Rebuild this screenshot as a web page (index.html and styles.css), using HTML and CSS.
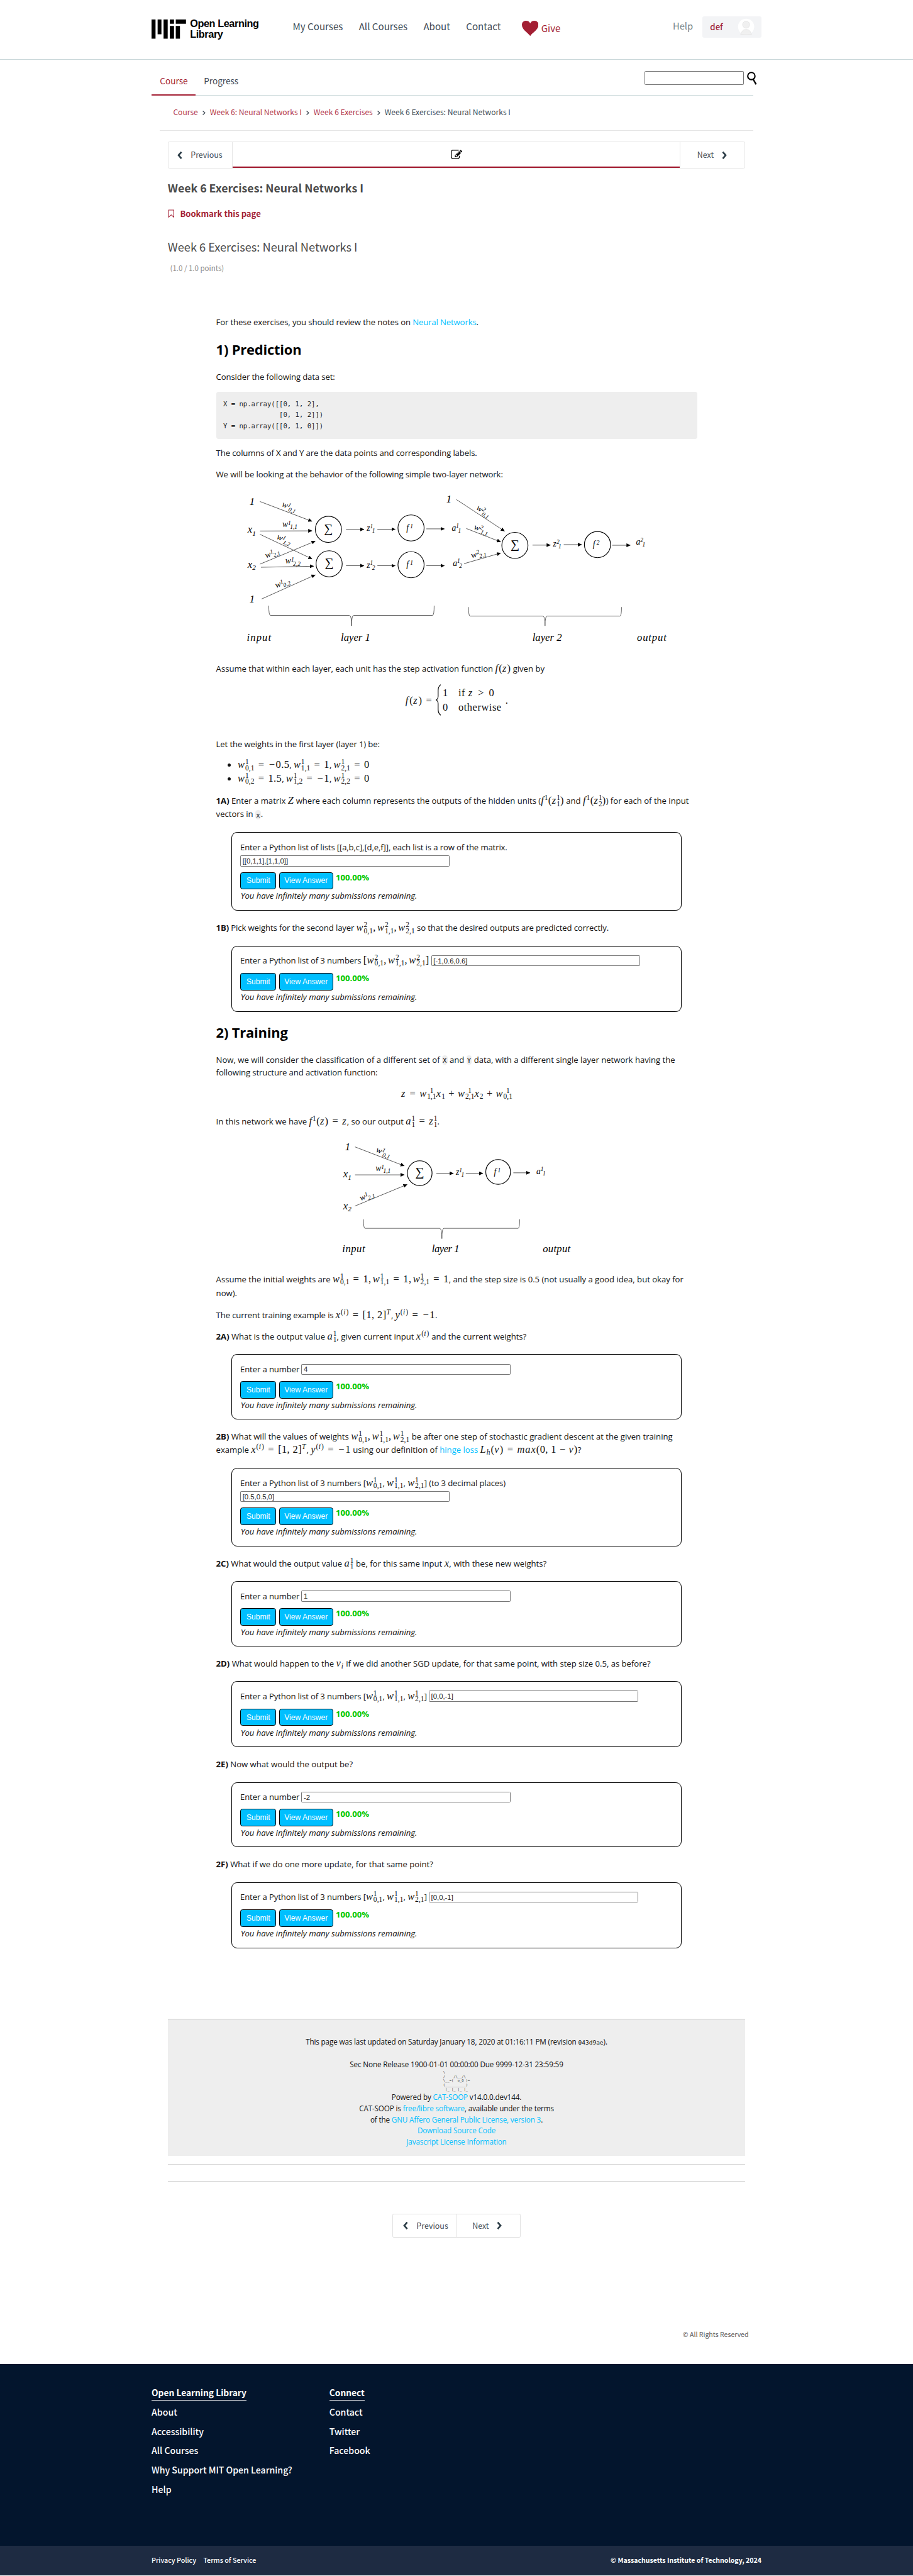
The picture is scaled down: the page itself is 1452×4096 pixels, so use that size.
FILE: index.html
```html
<!DOCTYPE html>
<html lang="en">
<head>
<meta charset="utf-8">
<title>Week 6 Exercises: Neural Networks I</title>
<link rel="stylesheet" href="styles.css">
</head>
<body>
<svg class="defs" width="0" height="0" aria-hidden="true">
  <defs>
    <marker id="arrow" markerUnits="userSpaceOnUse" markerWidth="9" markerHeight="8" refX="8" refY="4" orient="auto"><path d="M0 0L8.500 4L0 8z"/></marker>
    <symbol id="left" viewBox="0 0 12 18"><path d="M10 2L4 9L10 16" fill="none" stroke="#2d3e48" stroke-width="3.600"/></symbol>
    <symbol id="right" viewBox="0 0 12 18"><path d="M2 2L8 9L2 16" fill="none" stroke="#2d3e48" stroke-width="3.600"/></symbol>
    <symbol id="sep" viewBox="0 0 25 12"><path d="M10 2l4.500 4L10 10" fill="none" stroke="#414c57" stroke-width="1.700"/></symbol>
  </defs>
</svg>

<header class="top">
  <div class="top-in">
    <a class="logo">
      <svg class="mit" viewBox="0 0 74 42"><path d="M0 0h8.400v40.500H0zM12.800 0h8v31h-8zM25.300 0h8.700v40.500h-8.700zM38.500 0h8.800v9h-8.800zM38.500 13.500h8.800v27h-8.800zM51 0h21.500v9H51zM51 13.500h8.800v27H51z"/></svg>
      <span class="logo-text">Open Learning<br>Library</span>
    </a>
    <nav class="nav"><a>My Courses</a><a>All Courses</a><a>About</a><a>Contact</a></nav>
    <a class="give"><svg class="heart" viewBox="0 0 35 32"><path d="M17.500 32C13 25 0 19 0 8.500C0 3 4 0 8.500 0C13 0 16 2 17.500 5.500C19 2 22 0 26.500 0C31 0 35 3 35 8.500C35 19 22 25 17.500 32z" fill="#a31f34"/></svg><span>Give</span></a>
    <a class="help">Help</a>
    <div class="user"><span>def</span>
      <svg class="avatar" viewBox="0 0 36 36"><circle cx="18" cy="18" r="17" fill="#fff"/><circle cx="18" cy="13.500" r="7.500" fill="#f0f0f0" stroke="#dedede" stroke-width=".9"/><path d="M6.500 34C9 26 13 23.500 18 23.500C23 23.500 27 26 29.500 34z" fill="#f0f0f0" stroke="#dedede" stroke-width=".9"/></svg>
    </div>
  </div>
</header>

<div class="tabs">
  <a class="tab on">Course</a><a class="tab">Progress</a>
  <div class="search"><input type="text" aria-label="Search"><svg class="lens" viewBox="0 0 24 30"><circle cx="10.500" cy="10.500" r="7.600" fill="none" stroke="#000" stroke-width="2.800"/><path d="M14.500 17.500L20.500 28" stroke="#000" stroke-width="3.200"/></svg></div>
</div>

<div class="crumbs">
  <a>Course</a><svg viewBox="0 0 25 12"><use href="#sep"/></svg>
  <a>Week 6: Neural Networks I</a><svg viewBox="0 0 25 12"><use href="#sep"/></svg>
  <a>Week 6 Exercises</a><svg viewBox="0 0 25 12"><use href="#sep"/></svg>
  <span>Week 6 Exercises: Neural Networks I</span>
</div>

<main class="main">
  <div class="seq">
    <a class="seq-btn"><svg viewBox="0 0 12 18"><use href="#left"/></svg>Previous</a>
    <a class="seq-tab"><svg class="edit" viewBox="0 0 1792 1792"><path d="M888 1184l116-116-152-152-116 116v56h96v96h56zm440-720q-16-16-33 1l-350 350q-17 17-1 33t33-1l350-350q17-17 1-33zm80 594v190q0 119-84.500 203.500t-203.500 84.500h-832q-119 0-203.500-84.500t-84.500-203.500v-832q0-119 84.500-203.500t203.500-84.500h832q63 0 117 25 15 7 18 23 3 17-9 29l-49 49q-14 14-32 8-23-6-45-6h-832q-66 0-113 47t-47 113v832q0 66 47 113t113 47h832q66 0 113-47t47-113v-126q0-13 9-22l64-64q15-15 35-7t20 29zm-96-738l288 288-672 672h-288v-288zm444 132l-92 92-288-288 92-92q28-28 68-28t68 28l152 152q28 28 28 68t-28 68z"/></svg></a>
    <a class="seq-btn next">Next<svg viewBox="0 0 12 18"><use href="#right"/></svg></a>
  </div>
  <h1 class="unit">Week 6 Exercises: Neural Networks I</h1>
  <a class="bookmark"><svg viewBox="0 0 15 18"><path d="M1.500 1.200h11v15L7 11.500L1.500 16.200z" fill="none" stroke="#a31f34" stroke-width="1.400"/></svg>Bookmark this page</a>
  <h2 class="problem">Week 6 Exercises: Neural Networks I</h2>
  <p class="points">(1.0 / 1.0 points)</p>

  <article class="doc">
    <p class="first">For these exercises, you should review the notes on <a>Neural Networks</a>.</p>
    <h2>1) Prediction</h2>
    <p class="s24">Consider the following data set:</p>
    <pre class="code">X = np.array([[0, 1, 2],
              [0, 1, 2]])
Y = np.array([[0, 1, 0]])</pre>
    <p class="s16">The columns of X and Y are the data points and corresponding labels.</p>
    <p class="s18">We will be looking at the behavior of the following simple two-layer network:</p>

    <svg class="net net-two" viewBox="0 0 1060 360">
      <g class="wire">
        <path d="M117 35L226.500 76.700"/><path d="M117 97L226.500 96.700"/><path d="M117 104L226.500 155.700"/><path d="M117 166.700L233.300 118.300"/><path d="M119 173.300L230 171"/><path d="M120.400 240L233.300 189.300"/>
        <path d="M298 93.700H336"/><path d="M364 93.300H401.600"/><path d="M467 92.500H505"/><path d="M298 170H336"/><path d="M364 170H401.600"/><path d="M467 170H505"/>
        <path d="M530 30.700L631.500 97.300"/><path d="M551 91.700L623.400 120"/><path d="M546.300 165.700L623.400 143.300"/>
        <path d="M690.300 126.700H728"/><path d="M756 125.700H793.800"/><path d="M858 127H896"/>
      </g>
      <g class="cell"><circle cx="261" cy="93.500" r="27.500"/><circle cx="262.500" cy="166" r="27.500"/><circle cx="434.800" cy="90.600" r="27.500"/><circle cx="434.800" cy="168" r="27.500"/><circle cx="653.300" cy="127.300" r="27.500"/><circle cx="827" cy="125.600" r="27.500"/></g>
      <g class="brace"><path d="M135.500 254Q135.500 274.500 139 274.500H305Q309.700 274.500 309.700 296.500Q309.700 274.500 314 274.500H480Q483.400 274.500 483.400 254"/><path d="M555.800 257Q555.800 276 559 276H712Q716.700 276 716.700 296.500Q716.700 276 721 276H874Q877.600 276 877.600 257"/></g>
      <g class="lab">
        <text x="95" y="41.700">1</text><text x="91" y="101">x<tspan class="n" dy="6">1</tspan></text><text x="91" y="175">x<tspan class="n" dy="4">2</tspan></text><text x="95" y="247.500">1</text><text x="509" y="36.700">1</text>
        <text x="89.300" y="327.700" textLength="51">input</text><text x="287" y="327.700" textLength="62">layer 1</text><text x="690" y="327.700" textLength="62">layer 2</text><text x="910" y="327.700" textLength="62">output</text>
      </g>
      <g class="sum"><text x="261" y="100">∑</text><text x="262.500" y="172.500">∑</text><text x="653.300" y="134">∑</text></g>
      <g class="fn">
        <text x="425" y="96">f<tspan class="n" dy="-5" dx="3">1</tspan></text><text x="425" y="173">f<tspan class="n" dy="-5" dx="3">1</tspan></text><text x="817" y="131">f<tspan class="n" dy="-5" dx="3">2</tspan></text>
        <text x="341.500" y="97">z<tspan class="n" dy="-6">1</tspan><tspan class="n" dy="10" dx="-2">1</tspan></text>
        <text x="341.500" y="174">z<tspan class="n" dy="-6">1</tspan><tspan class="n" dy="10" dx="-2">2</tspan></text>
        <text x="520.600" y="96">a<tspan class="n" dy="-6">1</tspan><tspan class="n" dy="10" dx="-2">1</tspan></text>
        <text x="522.700" y="170">a<tspan class="n" dy="-6">1</tspan><tspan class="n" dy="10" dx="-2">2</tspan></text>
        <text x="733.600" y="130">z<tspan class="n" dy="-6">2</tspan><tspan class="n" dy="10" dx="-2">1</tspan></text>
        <text x="908" y="126">a<tspan class="n" dy="-6">2</tspan><tspan class="n" dy="10" dx="-2">1</tspan></text>
        <text transform="translate(162 45) rotate(22)">w<tspan class="n" dy="-5">1</tspan><tspan class="n" dy="9" dx="-2">0,1</tspan></text>
        <text transform="translate(164 89)">w<tspan class="n" dy="-5">1</tspan><tspan class="n" dy="9" dx="-2">1,1</tspan></text>
        <text transform="translate(151 113) rotate(24)">w<tspan class="n" dy="-5">1</tspan><tspan class="n" dy="9" dx="-2">1,2</tspan></text>
        <text transform="translate(129.800 154) rotate(-20)">w<tspan class="n" dy="-5">1</tspan><tspan class="n" dy="9" dx="-2">2,1</tspan></text>
        <text transform="translate(170.400 166)">w<tspan class="n" dy="-5">1</tspan><tspan class="n" dy="9" dx="-2">2,2</tspan></text>
        <text transform="translate(151 217) rotate(-20)">w<tspan class="n" dy="-5">1</tspan><tspan class="n" dy="9" dx="-2">0,2</tspan></text>
        <text transform="translate(571 51) rotate(34)">w<tspan class="n" dy="-5">2</tspan><tspan class="n" dy="9" dx="-2">0,1</tspan></text>
        <text transform="translate(566 93) rotate(20)">w<tspan class="n" dy="-5">2</tspan><tspan class="n" dy="9" dx="-2">1,1</tspan></text>
        <text transform="translate(562.500 154) rotate(-14)">w<tspan class="n" dy="-5">2</tspan><tspan class="n" dy="9" dx="-2">2,1</tspan></text>
      </g>
    </svg>

    <p class="s13 loose">Assume that within each layer, each unit has the step activation function <span class="m"><i>f</i>(<i>z</i>)</span> given by</p>
    <div class="cases m">
      <span><i>f</i>(<i>z</i>)<b class="op">=</b></span>
      <svg viewBox="0 0 11 66"><path d="M10.500 .8Q5 5 5 13V25Q5 31 .8 33Q5 35 5 41V53Q5 61 10.500 65.200" fill="none" stroke="#000" stroke-width="1.600"/></svg>
      <div class="rows"><span>1</span><span>if <i>z</i> <b class="gt">&gt;</b> 0</span><span>0</span><span>otherwise</span></div>
      <span class="dot">.</span>
    </div>
    <p class="s37">Let the weights in the first layer (layer 1) be:</p>
    <ul>
      <li><span class="m"><i>w</i><span class="ss"><s>1</s><s>0,1</s></span><b class="op">=</b><b class="mn">−</b>0.5</span>, <span class="m"><i>w</i><span class="ss"><s>1</s><s>1,1</s></span><b class="op">=</b>1</span>, <span class="m"><i>w</i><span class="ss"><s>1</s><s>2,1</s></span><b class="op">=</b>0</span></li>
      <li><span class="m"><i>w</i><span class="ss"><s>1</s><s>0,2</s></span><b class="op">=</b>1.5</span>, <span class="m"><i>w</i><span class="ss"><s>1</s><s>1,2</s></span><b class="op">=</b><b class="mn">−</b>1</span>, <span class="m"><i>w</i><span class="ss"><s>1</s><s>2,2</s></span><b class="op">=</b>0</span></li>
    </ul>
    <div class="q q1a"><p><b>1A)</b> Enter a matrix <i class="m">Z</i> where each column represents the outputs of the hidden units (<span class="m"><i>f</i><span class="sup">1</span>(<i>z</i><span class="ss"><s>1</s><s>1</s></span>)</span> and <span class="m"><i>f</i><span class="sup">1</span>(<i>z</i><span class="ss"><s>1</s><s>2</s></span>)</span>) for each of the input</p>
    <p>vectors in <code>x</code>.</p></div>
    <section class="box tall">
      <p>Enter a Python list of lists [[a,b,c],[d,e,f]], each list is a row of the matrix.</p>
      <input type="text" value="[[0,1,1],[1,1,0]]">
      <div class="act"><button>Submit</button><button>View Answer</button><b>100.00%</b></div>
      <em>You have infinitely many submissions remaining.</em>
    </section>
    <p class="q"><b>1B)</b> Pick weights for the second layer <span class="m"><i>w</i><span class="ss"><s>2</s><s>0,1</s></span>,<i class="c">w</i><span class="ss"><s>2</s><s>1,1</s></span>,<i class="c">w</i><span class="ss"><s>2</s><s>2,1</s></span></span> so that the desired outputs are predicted correctly.</p>
    <section class="box mathy">
      <div class="row"><span>Enter a Python list of 3 numbers <span class="m">[<i>w</i><span class="ss"><s>2</s><s>0,1</s></span>,<i class="c">w</i><span class="ss"><s>2</s><s>1,1</s></span>,<i class="c">w</i><span class="ss"><s>2</s><s>2,1</s></span>]</span></span><input type="text" value="[-1,0.6,0.6]"></div>
      <div class="act"><button>Submit</button><button>View Answer</button><b>100.00%</b></div>
      <em>You have infinitely many submissions remaining.</em>
    </section>

    <h2 class="h-two">2) Training</h2>
    <p class="s24 loose">Now, we will consider the classification of a different set of <code>X</code> and <code>Y</code> data, with a different single layer network having the</p>
    <p>following structure and activation function:</p>
    <p class="eq m"><i>z</i><b class="op">=</b><i>w</i><span class="ss"><s>1</s><s>1,1</s></span><i>x</i><span class="sub">1</span><b class="pl">+</b><i>w</i><span class="ss"><s>1</s><s>2,1</s></span><i>x</i><span class="sub">2</span><b class="pl">+</b><i>w</i><span class="ss"><s>1</s><s>0,1</s></span></p>
    <p class="s25 loose">In this network we have <span class="m"><i>f</i><span class="sup">1</span>(<i>z</i>)<b class="op">=</b><i>z</i></span>, so our output <span class="m"><i>a</i><span class="ss"><s>1</s><s>1</s></span><b class="op">=</b><i>z</i><span class="ss"><s>1</s><s>1</s></span></span>.</p>

    <svg class="net net-one" viewBox="0 0 1060 260">
      <g class="wire"><path d="M317 20.700L420.600 60.700"/><path d="M317 79.500H420.600"/><path d="M317 145L426.600 99.700"/><path d="M488 76.300H524"/><path d="M550 76.300H586"/><path d="M650 75.200H685"/></g>
      <g class="cell"><circle cx="453" cy="76" r="26"/><circle cx="618" cy="73.300" r="26"/></g>
      <g class="brace"><path d="M334.700 173Q334.700 192 338 192H495Q499.700 192 499.700 213.700Q499.700 192 504 192H660Q663.300 192 663.300 173"/></g>
      <g class="lab">
        <text x="296" y="27.500">1</text><text x="292" y="85">x<tspan class="n" dy="5">1</tspan></text><text x="292" y="151.700">x<tspan class="n" dy="4">2</tspan></text>
        <text x="290" y="242.700" textLength="48">input</text><text x="478.500" y="242.700" textLength="58">layer 1</text><text x="712" y="242.700" textLength="58">output</text>
      </g>
      <g class="sum"><text x="453" y="82">∑</text></g>
      <g class="fn">
        <text x="609" y="79">f<tspan class="n" dy="-5" dx="3">1</tspan></text>
        <text x="529" y="80">z<tspan class="n" dy="-6">1</tspan><tspan class="n" dy="9" dx="-2">1</tspan></text>
        <text x="698.500" y="78">a<tspan class="n" dy="-6">1</tspan><tspan class="n" dy="9" dx="-2">1</tspan></text>
        <text transform="translate(360 31) rotate(21)">w<tspan class="n" dy="-5">1</tspan><tspan class="n" dy="9" dx="-2">0,1</tspan></text>
        <text transform="translate(360 72)">w<tspan class="n" dy="-5">1</tspan><tspan class="n" dy="8" dx="-2">1,1</tspan></text>
        <text transform="translate(329 134) rotate(-20)">w<tspan class="n" dy="-5">1</tspan><tspan class="n" dy="9" dx="-2">2,1</tspan></text>
      </g>
    </svg>

    <div class="init"><p>Assume the initial weights are <span class="m"><i>w</i><span class="ss"><s>1</s><s>0,1</s></span><b class="op">=</b>1,<i class="c">w</i><span class="ss"><s>1</s><s>1,1</s></span><b class="op">=</b>1,<i class="c">w</i><span class="ss"><s>1</s><s>2,1</s></span><b class="op">=</b>1</span>, and the step size is 0.5 (not usually a good idea, but okay for</p>
    <p>now).</p></div>
    <p class="s17">The current training example is <span class="m"><i>x</i><span class="sup">(<i>i</i>)</span><b class="op">=</b>[1, 2]<i class="sup">T</i></span>, <span class="m"><i>y</i><span class="sup">(<i>i</i>)</span><b class="op">=</b><b class="mn">−</b>1</span>.</p>
    <p class="s19 loose"><b>2A)</b> What is the output value <span class="m"><i>a</i><span class="ss"><s>1</s><s>1</s></span></span>, given current input <span class="m"><i>x</i><span class="sup">(<i>i</i>)</span></span> and the current weights?</p>
    <section class="box">
      <div class="row"><span>Enter a number</span><input type="text" value="4"></div>
      <div class="act"><button>Submit</button><button>View Answer</button><b>100.00%</b></div>
      <em>You have infinitely many submissions remaining.</em>
    </section>
    <div class="q q2b"><p><b>2B)</b> What will the values of weights <span class="m"><i>w</i><span class="ss"><s>1</s><s>0,1</s></span>,<i class="c">w</i><span class="ss"><s>1</s><s>1,1</s></span>,<i class="c">w</i><span class="ss"><s>1</s><s>2,1</s></span></span> be after one step of stochastic gradient descent at the given training</p>
    <p>example <span class="m"><i>x</i><span class="sup">(<i>i</i>)</span><b class="op">=</b>[1, 2]<i class="sup">T</i></span>, <span class="m"><i>y</i><span class="sup">(<i>i</i>)</span><b class="op">=</b><b class="mn">−</b>1</span> using our definition of <a>hinge loss</a> <span class="m"><i>L</i><i class="sub">h</i>(<i>v</i>)<b class="op">=</b><i>max</i>(0, 1<b class="pl">−</b><i>v</i>)</span>?</p></div>
    <section class="box tall">
      <p>Enter a Python list of 3 numbers [<span class="m"><i>w</i><span class="ss"><s>1</s><s>0,1</s></span></span>, <span class="m"><i>w</i><span class="ss"><s>1</s><s>1,1</s></span></span>, <span class="m"><i>w</i><span class="ss"><s>1</s><s>2,1</s></span></span>] (to 3 decimal places)</p>
      <input type="text" value="[0.5,0.5,0]">
      <div class="act"><button>Submit</button><button>View Answer</button><b>100.00%</b></div>
      <em>You have infinitely many submissions remaining.</em>
    </section>
    <p class="q loose"><b>2C)</b> What would the output value <span class="m"><i>a</i><span class="ss"><s>1</s><s>1</s></span></span> be, for this same input <i class="m">x</i>, with these new weights?</p>
    <section class="box">
      <div class="row"><span>Enter a number</span><input type="text" value="1"></div>
      <div class="act"><button>Submit</button><button>View Answer</button><b>100.00%</b></div>
      <em>You have infinitely many submissions remaining.</em>
    </section>
    <p class="q loose"><b>2D)</b> What would happen to the <span class="m"><i>v</i><i class="sub">i</i></span> if we did another SGD update, for that same point, with step size 0.5, as before?</p>
    <section class="box mathy">
      <div class="row"><span>Enter a Python list of 3 numbers [<span class="m"><i>w</i><span class="ss"><s>1</s><s>0,1</s></span></span>, <span class="m"><i>w</i><span class="ss"><s>1</s><s>1,1</s></span></span>, <span class="m"><i>w</i><span class="ss"><s>1</s><s>2,1</s></span></span>]</span><input type="text" value="[0,0,-1]"></div>
      <div class="act"><button>Submit</button><button>View Answer</button><b>100.00%</b></div>
      <em>You have infinitely many submissions remaining.</em>
    </section>
    <p class="q loose"><b>2E)</b> Now what would the output be?</p>
    <section class="box">
      <div class="row"><span>Enter a number</span><input type="text" value="-2"></div>
      <div class="act"><button>Submit</button><button>View Answer</button><b>100.00%</b></div>
      <em>You have infinitely many submissions remaining.</em>
    </section>
    <p class="q loose"><b>2F)</b> What if we do one more update, for that same point?</p>
    <section class="box mathy">
      <div class="row"><span>Enter a Python list of 3 numbers [<span class="m"><i>w</i><span class="ss"><s>1</s><s>0,1</s></span></span>, <span class="m"><i>w</i><span class="ss"><s>1</s><s>1,1</s></span></span>, <span class="m"><i>w</i><span class="ss"><s>1</s><s>2,1</s></span></span>]</span><input type="text" value="[0,0,-1]"></div>
      <div class="act"><button>Submit</button><button>View Answer</button><b>100.00%</b></div>
      <em>You have infinitely many submissions remaining.</em>
    </section>
  </article>

  <div class="about">
    <p>This page was last updated on Saturday January 18, 2020 at 01:16:11 PM (revision <tt>043d9ae</tt>).</p>
    <p class="sec">Sec None Release 1900-01-01 00:00:00 Due 9999-12-31 23:59:59</p>
    <pre class="cat">\
/    /\__/\
\__=(  o_O )=
(__________)
 |_ |_ |_ |_</pre>
    <p>Powered by <a>CAT-SOOP</a> v14.0.0.dev144.</p>
    <p>CAT-SOOP is <a>free/libre software</a>, available under the terms</p>
    <p>of the <a>GNU Affero General Public License, version 3</a>.</p>
    <p><a>Download Source Code</a></p>
    <p><a>Javascript License Information</a></p>
  </div>
  <div class="rule r1"></div>
  <div class="rule r2"></div>
  <div class="pager">
    <a class="seq-btn"><svg viewBox="0 0 12 18"><use href="#left"/></svg>Previous</a><a class="seq-btn next">Next<svg viewBox="0 0 12 18"><use href="#right"/></svg></a>
  </div>
  <p class="rights">© All Rights Reserved</p>
</main>

<footer class="foot">
  <div class="cols">
    <div class="col"><h3>Open Learning Library</h3><a>About</a><a>Accessibility</a><a>All Courses</a><a>Why Support MIT Open Learning?</a><a>Help</a></div>
    <div class="col"><h3>Connect</h3><a>Contact</a><a>Twitter</a><a>Facebook</a></div>
  </div>
</footer>
<div class="legal"><div class="legal-in"><a>Privacy Policy</a><a>Terms of Service</a><span>© Massachusetts Institute of Technology, 2024</span></div></div>
</body>
</html>
```
FILE: styles.css
```css
/* 1rem is one design unit; the design is 1920 units wide */
* { box-sizing: border-box; }
html { font-size: .756px; background: #fff; }
body { margin: 0; font-family: "Noto Sans CJK SC", "Noto Sans", sans-serif; color: #414c57; }
p, h1, h2, h3, ul, pre { margin: 0; padding: 0; }
svg { flex: none; }
.defs { display: block; height: 0; }

/* header */
.top { height: 126rem; border-bottom: 1px solid #c9d7d9; }
.top-in { width: 1283rem; margin: 0 auto; display: flex; align-items: flex-start; }
.logo { display: flex; width: 297rem; padding-top: 41rem; }
.mit { width: 74rem; height: 42rem; }
.logo-text { margin-left: 7rem; margin-top: -3rem; font: 700 21.500rem/22.400rem "Liberation Sans", sans-serif; letter-spacing: -.55rem; color: #000; white-space: nowrap; }
.nav { display: flex; gap: 33.500rem; padding-top: 34.400rem; font-size: 20rem; line-height: 40rem; }
.give { display: flex; margin-left: 44rem; padding-top: 44rem; color: #a31f34; font-size: 20rem; }
.heart { width: 35rem; height: 32rem; }
.give span { line-height: 30rem; margin-left: 6rem; margin-top: -.500rem; }
.help { margin-left: auto; padding-top: 34.400rem; font-size: 19.500rem; line-height: 40rem; color: #78858a; }
.user { margin-left: 20rem; margin-top: 34rem; width: 124rem; height: 45rem; padding: 0 14rem 0 16rem; background: #f3f4f6; border-radius: 4rem; display: flex; align-items: center; justify-content: space-between; color: #a31f34; font-size: 17.500rem; font-weight: 500; line-height: 40rem; }
.avatar { width: 36rem; height: 36rem; }

.tabs { width: 1248rem; height: 75rem; margin: 0 auto; border-bottom: 1px solid #c9d7d9; display: flex; align-items: flex-start; font-size: 18rem; line-height: 30rem; }
.tab { height: 75rem; padding: 29rem 17rem 0; margin-left: -17rem; }
.tab + .tab { margin-left: 0; }
.tab.on { color: #a31f34; border-bottom: 2px solid #a31f34; }
.search { margin: 24rem -10rem 0 auto; display: flex; gap: 6rem; }
.search input { width: 208rem; height: 29rem; border: 1px solid #767676; border-radius: 2rem; background: #fff; }
.lens { width: 24rem; height: 30rem; }

.crumbs { width: 1248rem; height: 74rem; margin: 0 auto; padding: 23rem 28rem 0; border-bottom: 1px solid #e5e5e5; display: flex; font-size: 16rem; line-height: 24rem; white-space: nowrap; }
.crumbs a { color: #b2364a; }
.crumbs svg { width: 25rem; height: 12rem; margin-top: 7rem; }

/* unit */
.main { width: 1215rem; margin: 0 auto; padding-top: 23rem; }
.seq { display: flex; height: 56rem; border: 1px solid #e7e7e7; border-radius: 3rem; }
.seq-btn { width: 134rem; display: flex; align-items: center; padding-left: 18rem; gap: 17rem; font-size: 16.500rem; line-height: 24rem; }
.seq-btn svg { width: 12rem; height: 18rem; }
.seq-btn.next { padding: 0 36rem 0 0; justify-content: flex-end; }
.seq .next { width: 135rem; }
.seq-tab { flex: 1; border: 1px solid #e7e7e7; border-width: 0 1px; box-shadow: inset 0 -3rem #a31f34; display: flex; align-items: center; justify-content: center; }
.edit { width: 24rem; height: 24rem; }
.unit { margin-top: 24.700rem; font-size: 23.400rem; line-height: 32rem; font-weight: 700; color: #4a4a4a; }
.bookmark { display: flex; align-items: center; margin-top: 27rem; gap: 11rem; font-size: 17.300rem; font-weight: 700; line-height: 24rem; color: #a31f34; }
.bookmark svg { width: 15rem; height: 18rem; }
.problem { margin-top: 40.700rem; font-size: 24.100rem; line-height: 32rem; font-weight: 400; color: #4a4a4a; }
.points { margin-top: 17.200rem; padding-left: 5rem; font-size: 15.200rem; line-height: 24rem; color: #8b8b8b; }

/* exercise text */
.doc { height: 3670.400rem; padding-top: 88.200rem; margin: 0 100.300rem 0 101.700rem; font: 17.400rem/27rem "Open Sans", sans-serif; letter-spacing: -.17rem; color: #111; display: flow-root; white-space: nowrap; }
.doc p { height: 27rem; }
.doc a, .about a { color: #00bfff; }
.doc h2 { height: 40rem; margin-top: 24.300rem; font-size: 29rem; line-height: 40rem; color: #000; letter-spacing: -.25rem; }
.doc .h-two { margin-top: 23.400rem; }
.doc .s13 { margin-top: 12.800rem; } .doc .s16 { margin-top: 15.800rem; } .doc .s17 { margin-top: 16.900rem; }
.doc .s18 { margin-top: 18rem; } .doc .s19 { margin-top: 18.900rem; } .doc .s24 { margin-top: 23.800rem; }
.doc .s25 { margin-top: 25.200rem; } .doc .s37 { margin-top: 36.800rem; }
.loose, .q1a, .q2b, .init { letter-spacing: -.03rem; }
.code { margin-top: 18.200rem; height: 99rem; padding: 14.700rem 15rem 0; background: #eee; border-radius: 5rem; font: 14rem/23rem "DejaVu Sans Mono", monospace; letter-spacing: 0; color: #222; }
code { padding: 2rem 1.500rem; border-radius: 6rem; background: #eee; font: 14rem "DejaVu Sans Mono", monospace; letter-spacing: 0; }

/* formulas */
.m { font-family: "Liberation Serif", serif; font-size: 21.800rem; letter-spacing: .5rem; line-height: 20rem; }
.m i { letter-spacing: 1.300rem; }
.m b { font-weight: 400; display: inline-block; text-align: center; }
.m .op { width: 29rem; } .m .pl { width: 26rem; } .m .mn { width: 16rem; } .m .gt { width: 20rem; }
.m .c { margin-left: 3rem; }
.ss { display: inline-flex; flex-direction: column; vertical-align: 8rem; margin: -6rem 0; font-size: 15.200rem; line-height: 12.500rem; letter-spacing: .1rem; }
.ss s { text-decoration: none; }
.sup, .sub { font-size: 15.200rem; line-height: 0; vertical-align: 8rem; }
.sub { vertical-align: -4rem; }
.cases { height: 85rem; margin-top: 10.200rem; display: flex; align-items: center; justify-content: center; letter-spacing: .7rem; }
.cases svg { width: 11rem; height: 66rem; }
.cases i { letter-spacing: 2.500rem; }
.rows { display: grid; grid-template-columns: 33rem auto; row-gap: 11.500rem; margin-left: 3rem; }
.dot { margin-left: 8rem; }
.doc ul { margin-top: 17.200rem; padding-left: 45.500rem; line-height: 28rem; }
.doc li { height: 28rem; }
.doc .eq { margin-top: 11.100rem; height: 40rem; line-height: 40rem; text-align: center; }
.q1a p { height: 28rem; line-height: 28rem; }
.doc .init { margin-top: 26.300rem; }
.doc .init p { height: 29rem; line-height: 29rem; }
.q2b p { height: 27.700rem; line-height: 27.700rem; }
.doc .q { margin-top: 22.500rem; }
.doc .q1a { margin-top: 19.300rem; }

/* figures: sizes inside them are in viewBox units */
.net { display: block; width: 1060rem; margin-left: -24.500rem; fill: #000; }
.net-two { height: 360rem; margin-top: 9.200rem; }
.net-one { height: 260rem; margin-top: 18.500rem; }
.net text { font-family: "Liberation Serif", serif; font-style: italic; letter-spacing: 0; }
.wire path { stroke: #222; stroke-width: 1; marker-end: url(#arrow); }
.cell circle { fill: none; stroke: #000; stroke-width: 1.500; }
.brace path { fill: none; stroke: #333; stroke-width: 1; }
.lab text { font-size: 22px; }
.net .sum text { font-size: 26px; font-style: normal; text-anchor: middle; }
.fn text { font-size: 18px; }
.net .n { font-size: 12.500px; }
.lab .n { font-size: 15px; }

/* answer boxes */
.box { width: 947rem; height: 137.500rem; margin: 23.400rem 0 0 32.500rem; padding: 16.500rem 17rem 0; border: 1px solid #000; border-radius: 12rem; }
.box.mathy { height: 139.300rem; }
.box.tall { height: 165.500rem; padding-top: 17.300rem; }
.row { height: 27rem; display: flex; gap: 4rem; }
.box input { display: block; width: 440rem; height: 23.300rem; padding: 0 3.500rem; border: 1px solid #767676; border-radius: 2rem; background: #fff; font: 15rem "Liberation Sans", sans-serif; color: #222; }
.row input { margin-top: 2.300rem; }
.tall input { margin-top: 3.200rem; }
.act { height: 36.300rem; margin-top: 12rem; display: flex; gap: 5.500rem; }
.mathy .act { margin-top: 13rem; }
.tall .act { margin-top: 11.800rem; }
.act button { width: 76rem; padding: 0; border: 1px solid #000; border-radius: 5rem; background: #00bfff; color: #fff; font: 16rem "Liberation Sans", sans-serif; }
.act button + button { width: 114rem; }
.act b { line-height: 22.500rem; color: #00c800; letter-spacing: 0; }
.box em { display: block; line-height: 27rem; letter-spacing: -.03rem; margin-top: .300rem; margin-left: 1rem; }

/* page info */
.about { height: 289rem; padding-top: 36.500rem; border-top: 1px solid #c8c8c8; background: #eee; text-align: center; font: 15.500rem/23.500rem "Open Sans", sans-serif; letter-spacing: -.2rem; color: #111; }
.about p { height: 23.500rem; }
.about .sec { margin-top: 23.500rem; }
.about tt { font: 12.600rem "DejaVu Sans Mono", monospace; letter-spacing: 0; }
.cat { display: block; width: 56rem; height: 45.500rem; margin: 0 auto; text-align: left; font: 7.200rem/8.900rem "DejaVu Sans Mono", monospace; letter-spacing: 0; color: #333; }
.rule { height: 1px; background: #d8d8d8; margin-top: 17rem; }
.r2 { margin-top: 34rem; }
.pager { width: 269rem; height: 50rem; margin: 67.500rem auto 0; display: flex; border: 1px solid #e2e2e2; border-radius: 3rem; }
.pager .seq-btn { padding-left: 20rem; }
.pager .next { border-left: 1px solid #e2e2e2; width: 135rem; padding: 0 36rem 0 0; }
.rights { margin-top: 193.400rem; margin-right: -7rem; text-align: right; font-size: 14rem; line-height: 20rem; color: #5c5c5c; }

/* footer */
.foot { margin-top: 52.600rem; height: 382rem; padding-top: 46.300rem; background: #03152d; color: #fff; }
.cols { width: 1283rem; margin: 0 auto; display: flex; }
.col { width: 374rem; display: flex; flex-direction: column; align-items: flex-start; font-size: 18.700rem; font-weight: 500; line-height: 40.500rem; white-space: nowrap; }
.col h3 { height: 31rem; margin-bottom: 3.900rem; border-bottom: 1px solid #fff; font-size: 18.200rem; font-weight: 700; line-height: 28rem; }
.legal { height: 63rem; overflow: hidden; background: #1e2b42; color: #fff; }
.legal-in { width: 1283rem; height: 62rem; margin: 0 auto; display: flex; gap: 15rem; font-size: 14.200rem; font-weight: 500; line-height: 62rem; }
.legal span { margin-left: auto; font-size: 14rem; font-weight: 700; }
```
